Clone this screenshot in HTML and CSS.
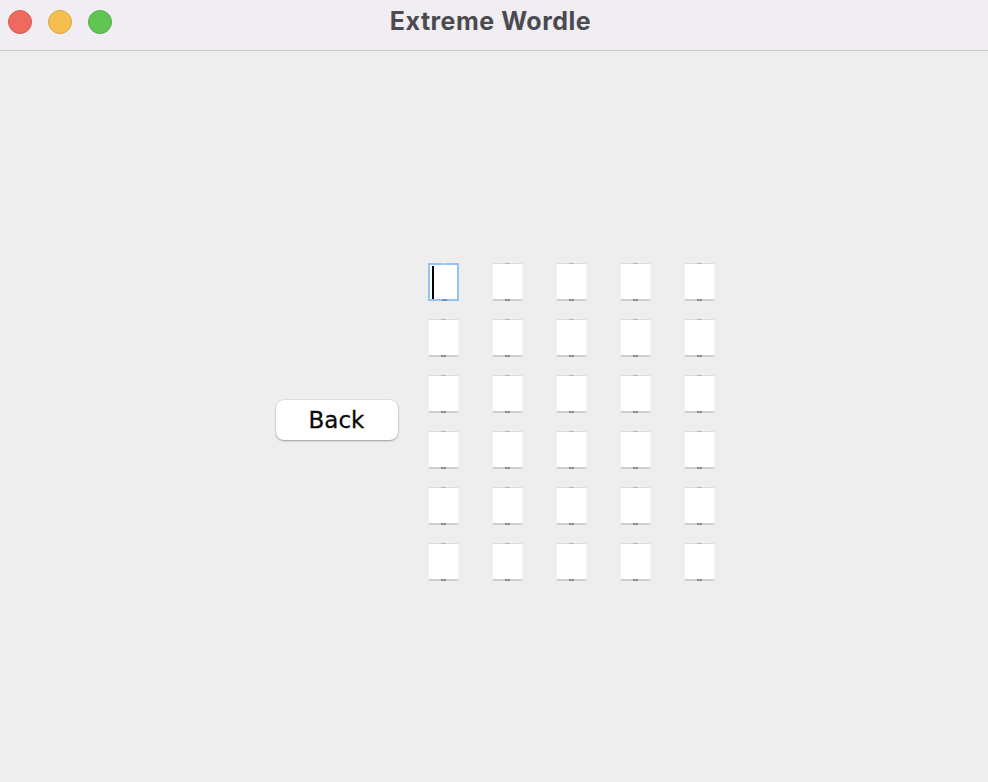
FILE: index.html
```html
<!DOCTYPE html>
<html>
<head>
<meta charset="utf-8">
<title>Extreme Wordle</title>
<link rel="stylesheet" href="styles.css">
</head>
<body>
<div class="window">
  <header class="titlebar">
    <div class="lights">
      <span class="light red"></span>
      <span class="light yellow"></span>
      <span class="light green"></span>
    </div>
    <div class="title">Extreme Wordle</div>
  </header>
  <main class="content">
    <button class="back">Back</button>
    <div class="grid">
      <div class="cell focused"><span class="caret"></span></div>
      <div class="cell"></div><div class="cell"></div><div class="cell"></div><div class="cell"></div>
      <div class="cell"></div><div class="cell"></div><div class="cell"></div><div class="cell"></div><div class="cell"></div>
      <div class="cell"></div><div class="cell"></div><div class="cell"></div><div class="cell"></div><div class="cell"></div>
      <div class="cell"></div><div class="cell"></div><div class="cell"></div><div class="cell"></div><div class="cell"></div>
      <div class="cell"></div><div class="cell"></div><div class="cell"></div><div class="cell"></div><div class="cell"></div>
      <div class="cell"></div><div class="cell"></div><div class="cell"></div><div class="cell"></div><div class="cell"></div>
    </div>
  </main>
</div>
</body>
</html>
```
FILE: styles.css
```css
html, body {
  margin: 0;
  padding: 0;
}
body {
  width: 988px;
  height: 782px;
  overflow: hidden;
  background: #eeeeee;
  font-family: "DejaVu Sans", sans-serif;
}
.window {
  display: flex;
  flex-direction: column;
  height: 782px;
}
.titlebar {
  position: relative;
  height: 50px;
  background: #f0eef3;
  border-bottom: 1px solid #cacaca;
  display: flex;
  align-items: center;
  justify-content: center;
  flex: none;
}
.lights {
  position: absolute;
  left: 8px;
  top: 10px;
  display: flex;
  gap: 16px;
}
.light {
  width: 22px;
  height: 22px;
  border-radius: 50%;
  display: block;
}
.red { background: #ee6a5f; border: 1px solid #d65a50; }
.yellow { background: #f5bf4f; border: 1px solid #d9a43f; }
.green { background: #61c554; border: 1px solid #51ad45; }
.title {
  font-family: Inter, "Liberation Sans", sans-serif;
  font-weight: 700;
  font-size: 25px;
  color: #4b4a4f;
  margin-left: -7px;
  margin-top: -8px;
  letter-spacing: 0.5px;
}
.content {
  flex: 1;
  display: flex;
  align-items: center;
  justify-content: center;
  gap: 30px;
  padding-top: 11px;
  padding-left: 2px;
  box-sizing: border-box;
}
.back {
  width: 122px;
  height: 40px;
  border: none;
  border-radius: 8px;
  background: #ffffff;
  box-shadow: 0 1px 2px rgba(0,0,0,0.3), 0 0 0 0.5px rgba(0,0,0,0.1);
  font-family: "DejaVu Sans", sans-serif;
  font-size: 23px;
  color: #0a0a0a;
  -webkit-text-stroke: 0.3px #0a0a0a;
  padding: 0;
  margin-top: -4px;
}
.grid {
  display: grid;
  grid-template-columns: repeat(5, 31px);
  grid-auto-rows: 38px;
  column-gap: 33px;
  row-gap: 18px;
}
.cell {
  position: relative;
  background: #ffffff;
  box-sizing: border-box;
  border-top: 1px solid #dcdcdc;
  border-left: 1px solid #f4f4f4;
  border-right: 1px solid #f4f4f4;
  border-bottom: 2px solid #cfcfcf;
}
.cell::before {
  content: "";
  position: absolute;
  top: -1px;
  left: 12px;
  width: 5px;
  height: 1px;
  background: #b8b8b8;
}
.cell::after {
  content: "";
  position: absolute;
  bottom: -2px;
  left: 12px;
  width: 5px;
  height: 2px;
  background: #8f8f8f;
}
.cell.focused {
  border: 2px solid #92c3f7;
  border-bottom: 2px solid #92c3f7;
}
.cell.focused::before {
  top: -2px;
  background: #a9cdf2;
  height: 2px;
}
.cell.focused::after {
  bottom: -2px;
  background: #6f8fb0;
}
.caret {
  position: absolute;
  left: 2px;
  top: 1px;
  width: 2px;
  height: 33px;
  background: #000;
}
```
